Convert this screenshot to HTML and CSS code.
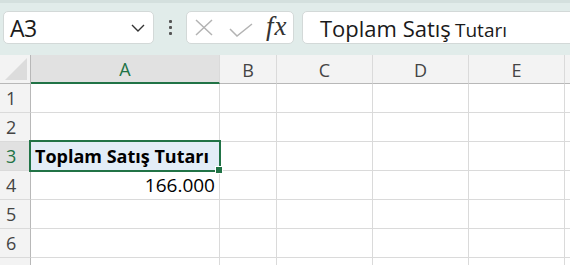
FILE: index.html
```html
<!DOCTYPE html>
<html lang="tr">
<head>
  <meta charset="UTF-8">
  <meta name="viewport" content="width=device-width, initial-scale=1.0">
  <title>Sheet</title>
  <link rel="stylesheet" href="styles.css">
</head>
<body>
  <div class="toolbar">
    <div class="name-box">
      <span class="name-text">A3</span>
      <svg class="chevron" width="14" height="8" viewBox="0 0 14 8"><path d="M1 1 L7 7 L13 1" fill="none" stroke="#333" stroke-width="1.4"/></svg>
    </div>
    <div class="dots"><span></span><span></span><span></span></div>
    <div class="fx-box">
      <svg class="icon-x" width="18" height="17" viewBox="0 0 18 17"><path d="M1 1 L17 16 M17 1 L1 16" stroke="#b3b3b3" stroke-width="1.5" fill="none"/></svg>
      <svg class="icon-check" width="24" height="14" viewBox="0 0 24 14"><path d="M1 6 L8 13 L23 1" stroke="#b3b3b3" stroke-width="1.5" fill="none"/></svg>
      <span class="fx">fx</span>
    </div>
    <div class="formula-bar">
      <span class="formula-text"><span class="formula-big">Toplam Satış</span> <span class="formula-small">Tutarı</span></span>
    </div>
  </div>

  <div class="sheet">
    <div class="corner"><svg width="22" height="22" viewBox="0 0 22 22"><polygon points="22,0 22,22 0,22" fill="#dcdcdc"/></svg></div>
    <div class="col-head active">A</div>
    <div class="col-head">B</div>
    <div class="col-head">C</div>
    <div class="col-head">D</div>
    <div class="col-head">E</div>
    <div class="col-head"></div>

    <div class="row-head">1</div>
    <div class="cell"></div><div class="cell"></div><div class="cell"></div><div class="cell"></div><div class="cell"></div><div class="cell"></div>

    <div class="row-head">2</div>
    <div class="cell"></div><div class="cell"></div><div class="cell"></div><div class="cell"></div><div class="cell"></div><div class="cell"></div>

    <div class="row-head active">3</div>
    <div class="cell selected bold">Toplam Satış Tutarı<div class="sel-box"><span class="handle"></span></div></div>
    <div class="cell"></div><div class="cell"></div><div class="cell"></div><div class="cell"></div><div class="cell"></div>

    <div class="row-head">4</div>
    <div class="cell num">166.000</div>
    <div class="cell"></div><div class="cell"></div><div class="cell"></div><div class="cell"></div><div class="cell"></div>

    <div class="row-head">5</div>
    <div class="cell"></div><div class="cell"></div><div class="cell"></div><div class="cell"></div><div class="cell"></div><div class="cell"></div>

    <div class="row-head">6</div>
    <div class="cell"></div><div class="cell"></div><div class="cell"></div><div class="cell"></div><div class="cell"></div><div class="cell"></div>

    <!-- row 7 only peeks in at the bottom edge -->
    <div class="row-head"></div>
    <div class="cell"></div><div class="cell"></div><div class="cell"></div><div class="cell"></div><div class="cell"></div><div class="cell"></div>
  </div>
</body>
</html>
```

FILE: styles.css
```css
html, body {
  margin: 0;
  padding: 0;
  overflow: hidden;
}
body {
  width: 570px;
  height: 265px;
  background: #ffffff;
  font-family: "Open Sans", "Noto Sans", sans-serif;
  color: #1f1f1f;
}
.toolbar {
  height: 55px;
  box-sizing: border-box;
  border-top: 3px solid #d4e0de;
  background: #e1ecea;
  display: flex;
  align-items: flex-start;
  padding-top: 8px;
  padding-left: 3px;
  overflow: hidden;
}
.name-box {
  width: 151px;
  height: 33px;
  box-sizing: border-box;
  background: #ffffff;
  border: 1px solid #d3d9d8;
  border-radius: 5px;
  display: flex;
  align-items: center;
  justify-content: space-between;
  padding: 0 8px 0 6px;
}
.name-text {
  font-size: 23px;
  color: #1a1a1a;
  letter-spacing: -0.5px;
}
.dots {
  width: 32px;
  display: flex;
  flex-direction: column;
  align-items: center;
  gap: 3px;
  padding-top: 9px;
}
.dots span {
  width: 3px;
  height: 3px;
  background: #555;
  border-radius: 1px;
}
.fx-box {
  width: 108px;
  height: 33px;
  box-sizing: border-box;
  background: #ffffff;
  border: 1px solid #d3d9d8;
  border-radius: 5px;
  display: flex;
  align-items: center;
  padding-left: 8px;
}
.icon-x {
  margin-right: 16px;
}
.icon-check {
  margin-top: 4px;
  margin-right: 13px;
}
.fx {
  font-family: "Liberation Serif", "DejaVu Serif", serif;
  font-style: italic;
  font-size: 27px;
  line-height: 1;
  color: #333;
  letter-spacing: 1px;
  margin-top: -3px;
}
.formula-bar {
  flex: 1;
  min-width: 0;
  height: 33px;
  box-sizing: border-box;
  margin-left: 8px;
  margin-right: -10px;
  background: #ffffff;
  border: 1px solid #d3d9d8;
  border-radius: 5px;
  display: flex;
  align-items: center;
  padding-left: 17px;
  white-space: pre;
  color: #1a1a1a;
}
.formula-big {
  font-size: 22px;
}
.formula-small {
  font-size: 19px;
}
.sheet {
  width: 570px;
  height: 210px;
  overflow: hidden;
  display: grid;
  grid-template-columns: 31px 189px 57px 96px 96px 96px 96px;
  grid-template-rows: repeat(8, 29px);
  font-size: 18px;
}
.corner {
  background: #f3f3f3;
  border-right: 1px solid #b8b8b8;
  border-bottom: 1px solid #b8b8b8;
  display: flex;
  align-items: flex-end;
  justify-content: flex-end;
  padding: 0 3px 3px 0;
}
.col-head {
  background: #f3f3f3;
  border-right: 1px solid #dadada;
  border-bottom: 1px solid #b8b8b8;
  display: flex;
  align-items: center;
  justify-content: center;
  color: #444;
  padding-top: 1px;
}
.col-head.active {
  background: #e1e1e1;
  color: #217346;
  border-bottom: 2px solid #217346;
}
.row-head {
  background: #f3f3f3;
  border-right: 1px solid #b8b8b8;
  border-bottom: 1px solid #dadada;
  display: flex;
  align-items: center;
  padding-left: 6px;
  color: #444;
}
.row-head.active {
  background: #e1e1e1;
  color: #217346;
}
.cell {
  border-right: 1px solid #dadada;
  border-bottom: 1px solid #dadada;
  display: flex;
  align-items: center;
  padding: 0 4px;
  white-space: nowrap;
  color: #000;
}
.bold {
  font-weight: 700;
  font-size: 18px;
}
.num {
  justify-content: flex-end;
  font-size: 19px;
}
.selected {
  position: relative;
  background: #e3edf7;
}
.sel-box {
  position: absolute;
  top: -2px;
  left: -2px;
  right: -2px;
  bottom: -2px;
  border: 2px solid #217346;
}
.handle {
  position: absolute;
  right: -4px;
  bottom: -4px;
  width: 6px;
  height: 6px;
  background: #217346;
  border: 1px solid #ffffff;
}
```
